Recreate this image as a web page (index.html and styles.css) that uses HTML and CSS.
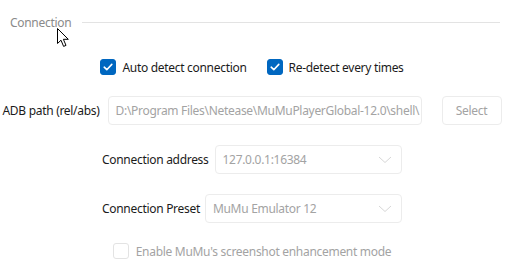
FILE: index.html
```html
<!DOCTYPE html>
<html lang="en">
<head>
    <meta charset="utf-8">
    <title>Connection settings</title>
    <link rel="stylesheet" href="styles.css">
</head>
<body>
    <div class="page">
        <div class="section-head">
            <span class="section-title">Connection</span>
            <span class="section-line"></span>
        </div>

        <div class="row row-checks">
            <label class="check">
                <span class="box checked">
                    <svg width="12" height="12" viewBox="0 0 12 12"><path d="M2.2 6.2 L4.8 8.7 L9.8 3.4" fill="none" stroke="#fff" stroke-width="1.6" stroke-linecap="round" stroke-linejoin="round"/></svg>
                </span>
                Auto detect connection
            </label>
            <label class="check">
                <span class="box checked">
                    <svg width="12" height="12" viewBox="0 0 12 12"><path d="M2.2 6.2 L4.8 8.7 L9.8 3.4" fill="none" stroke="#fff" stroke-width="1.6" stroke-linecap="round" stroke-linejoin="round"/></svg>
                </span>
                Re-detect every times
            </label>
        </div>

        <div class="row row-adb">
            <span class="label">ADB path (rel/abs)</span>
            <div class="field">D:\Program Files\Netease\MuMuPlayerGlobal-12.0\shell\</div>
            <button class="btn" disabled>Select</button>
        </div>

        <div class="row row-combo">
            <span class="label">Connection address</span>
            <div class="field combo">
                <span>127.0.0.1:16384</span>
                <svg width="14" height="8" viewBox="0 0 14 8"><path d="M1 1 L7 6.5 L13 1" fill="none" stroke="#d6d6d6" stroke-width="1"/></svg>
            </div>
        </div>

        <div class="row row-combo preset">
            <span class="label">Connection Preset</span>
            <div class="field combo">
                <span>MuMu Emulator 12</span>
                <svg width="14" height="8" viewBox="0 0 14 8"><path d="M1 1 L7 6.5 L13 1" fill="none" stroke="#d6d6d6" stroke-width="1"/></svg>
            </div>
        </div>

        <div class="row row-last">
            <label class="check disabled">
                <span class="box"></span>
                Enable MuMu's screenshot enhancement mode
            </label>
        </div>
    </div>

    <!-- mouse pointer captured in the screenshot -->
    <svg class="cursor" width="13" height="20" viewBox="0 0 13 20">
        <path d="M0.5 0.5 L0.5 15.5 L4 12.2 L6.6 18.4 L9 17.4 L6.4 11.3 L11.3 11.3 Z" fill="#fff" stroke="#000" stroke-width="1" stroke-linejoin="round"/>
    </svg>
</body>
</html>
```

FILE: styles.css
```css
* {
    margin: 0;
    padding: 0;
    box-sizing: border-box;
}

body {
    font-family: "Noto Sans", "Open Sans", sans-serif;
    font-size: 12px;
    letter-spacing: -0.3px;
    color: #1b1b1b;
    background: #fff;
    width: 515px;
    height: 271px;
    overflow: hidden;
}

.page {
    width: 504px;
    display: flex;
    flex-direction: column;
    align-items: center;
}

.section-head {
    align-self: stretch;
    display: flex;
    align-items: center;
    gap: 11px;
    height: 18px;
    margin-top: 13px;
    padding-left: 10px;
    padding-right: 4px;
}

.section-title {
    color: #8a8a8a;
}

.section-line {
    flex: 1;
    height: 1px;
    background: #e3e3e3;
}

.row {
    display: flex;
    align-items: center;
}

.row-checks {
    height: 16px;
    margin-top: 28px;
    gap: 20px;
}

.check {
    display: flex;
    align-items: center;
    gap: 6px;
}

.box {
    width: 16px;
    height: 16px;
    border-radius: 3px;
    border: 1px solid #e3e3e3;
    background: #fff;
    display: flex;
    align-items: center;
    justify-content: center;
}

.box.checked {
    background: #0067c0;
    border-color: #0067c0;
}

.check.disabled {
    color: #a3a3a3;
}

.row-adb {
    width: 499px;
    height: 29px;
    margin-top: 21px;
}

.label {
    white-space: nowrap;
}

.field {
    flex: 1;
    height: 29px;
    margin-left: 8px;
    border: 1px solid #ececec;
    border-radius: 4px;
    color: #a3a3a3;
    padding-left: 7px;
    display: flex;
    align-items: center;
    white-space: nowrap;
    overflow: hidden;
}

.btn {
    width: 60px;
    height: 29px;
    margin-left: 20px;
    border: 1px solid #ececec;
    border-radius: 4px;
    background: #fff;
    color: #a3a3a3;
    font: inherit;
    letter-spacing: inherit;
}

.row-combo {
    width: 300px;
    height: 29px;
    margin-top: 20px;
}

.row-combo .field {
    margin-left: 6px;
}

.row-combo.preset .field {
    margin-left: 5px;
}

.combo {
    justify-content: space-between;
    padding-right: 9px;
}

.row-last {
    height: 16px;
    margin-top: 20px;
}

.row-last .check {
    gap: 7px;
}

.cursor {
    position: absolute;
    left: 57px;
    top: 28px;
}
```
